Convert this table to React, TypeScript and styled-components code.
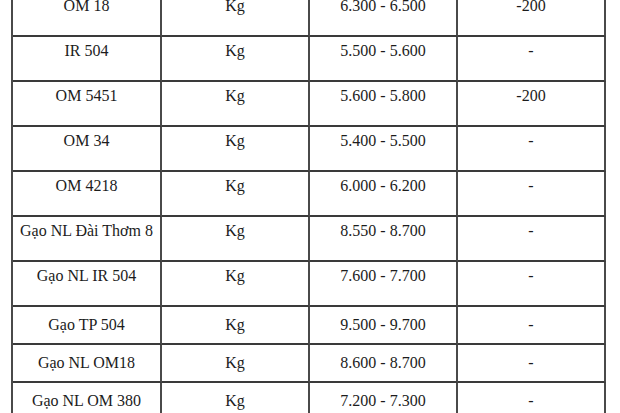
import React from "react";
import styled, { createGlobalStyle } from "styled-components";

const Global = createGlobalStyle`
  html, body { margin: 0; padding: 0; background: #ffffff; }
  body { font-family: "Liberation Serif", "Times New Roman", serif; overflow: hidden; }
`;

const Page = styled.div`
  width: 620px;
  height: 413px;
  overflow: hidden;
  background: #ffffff;
`;

const Table = styled.div`
  display: grid;
  grid-template-columns: 149px 148px 148px 148px;
  margin: -10px 0 0 11px;
  border-left: 2px solid #4a4a4a;
  border-top: 2px solid #4a4a4a;
  width: max-content;
`;

const Cell = styled.div<{ $tall: boolean }>`
  box-sizing: border-box;
  height: ${(p) => (p.$tall ? 45 : 38)}px;
  border-right: 2px solid #4a4a4a;
  border-bottom: 2px solid #3a3a3a;
  display: flex;
  flex-direction: column;
  align-items: center;
  justify-content: center;
  padding-bottom: ${(p) => (p.$tall ? 15 : 0)}px;
  font-size: 16px;
  color: #1c1c1c;
  white-space: nowrap;
`;

type Row = { name: string; unit: string; price: string; change: string; tall: boolean };

const rows: Row[] = [
  { name: "OM 18", unit: "Kg", price: "6.300 - 6.500", change: "-200", tall: true },
  { name: "IR 504", unit: "Kg", price: "5.500 - 5.600", change: "-", tall: true },
  { name: "OM 5451", unit: "Kg", price: "5.600 - 5.800", change: "-200", tall: true },
  { name: "OM 34", unit: "Kg", price: "5.400 - 5.500", change: "-", tall: true },
  { name: "OM 4218", unit: "Kg", price: "6.000 - 6.200", change: "-", tall: true },
  { name: "Gạo NL Đài Thơm 8", unit: "Kg", price: "8.550 - 8.700", change: "-", tall: true },
  { name: "Gạo NL IR 504", unit: "Kg", price: "7.600 - 7.700", change: "-", tall: true },
  { name: "Gạo TP 504", unit: "Kg", price: "9.500 - 9.700", change: "-", tall: false },
  { name: "Gạo NL OM18", unit: "Kg", price: "8.600 - 8.700", change: "-", tall: false },
  { name: "Gạo NL OM 380", unit: "Kg", price: "7.200 - 7.300", change: "-", tall: false },
];

export default function App() {
  return (
    <Page>
      <Global />
      <Table>
        {rows.map((r) => (
          <React.Fragment key={r.name}>
            <Cell $tall={r.tall}>{r.name}</Cell>
            <Cell $tall={r.tall}>{r.unit}</Cell>
            <Cell $tall={r.tall}>{r.price}</Cell>
            <Cell $tall={r.tall}>{r.change}</Cell>
          </React.Fragment>
        ))}
      </Table>
    </Page>
  );
}
